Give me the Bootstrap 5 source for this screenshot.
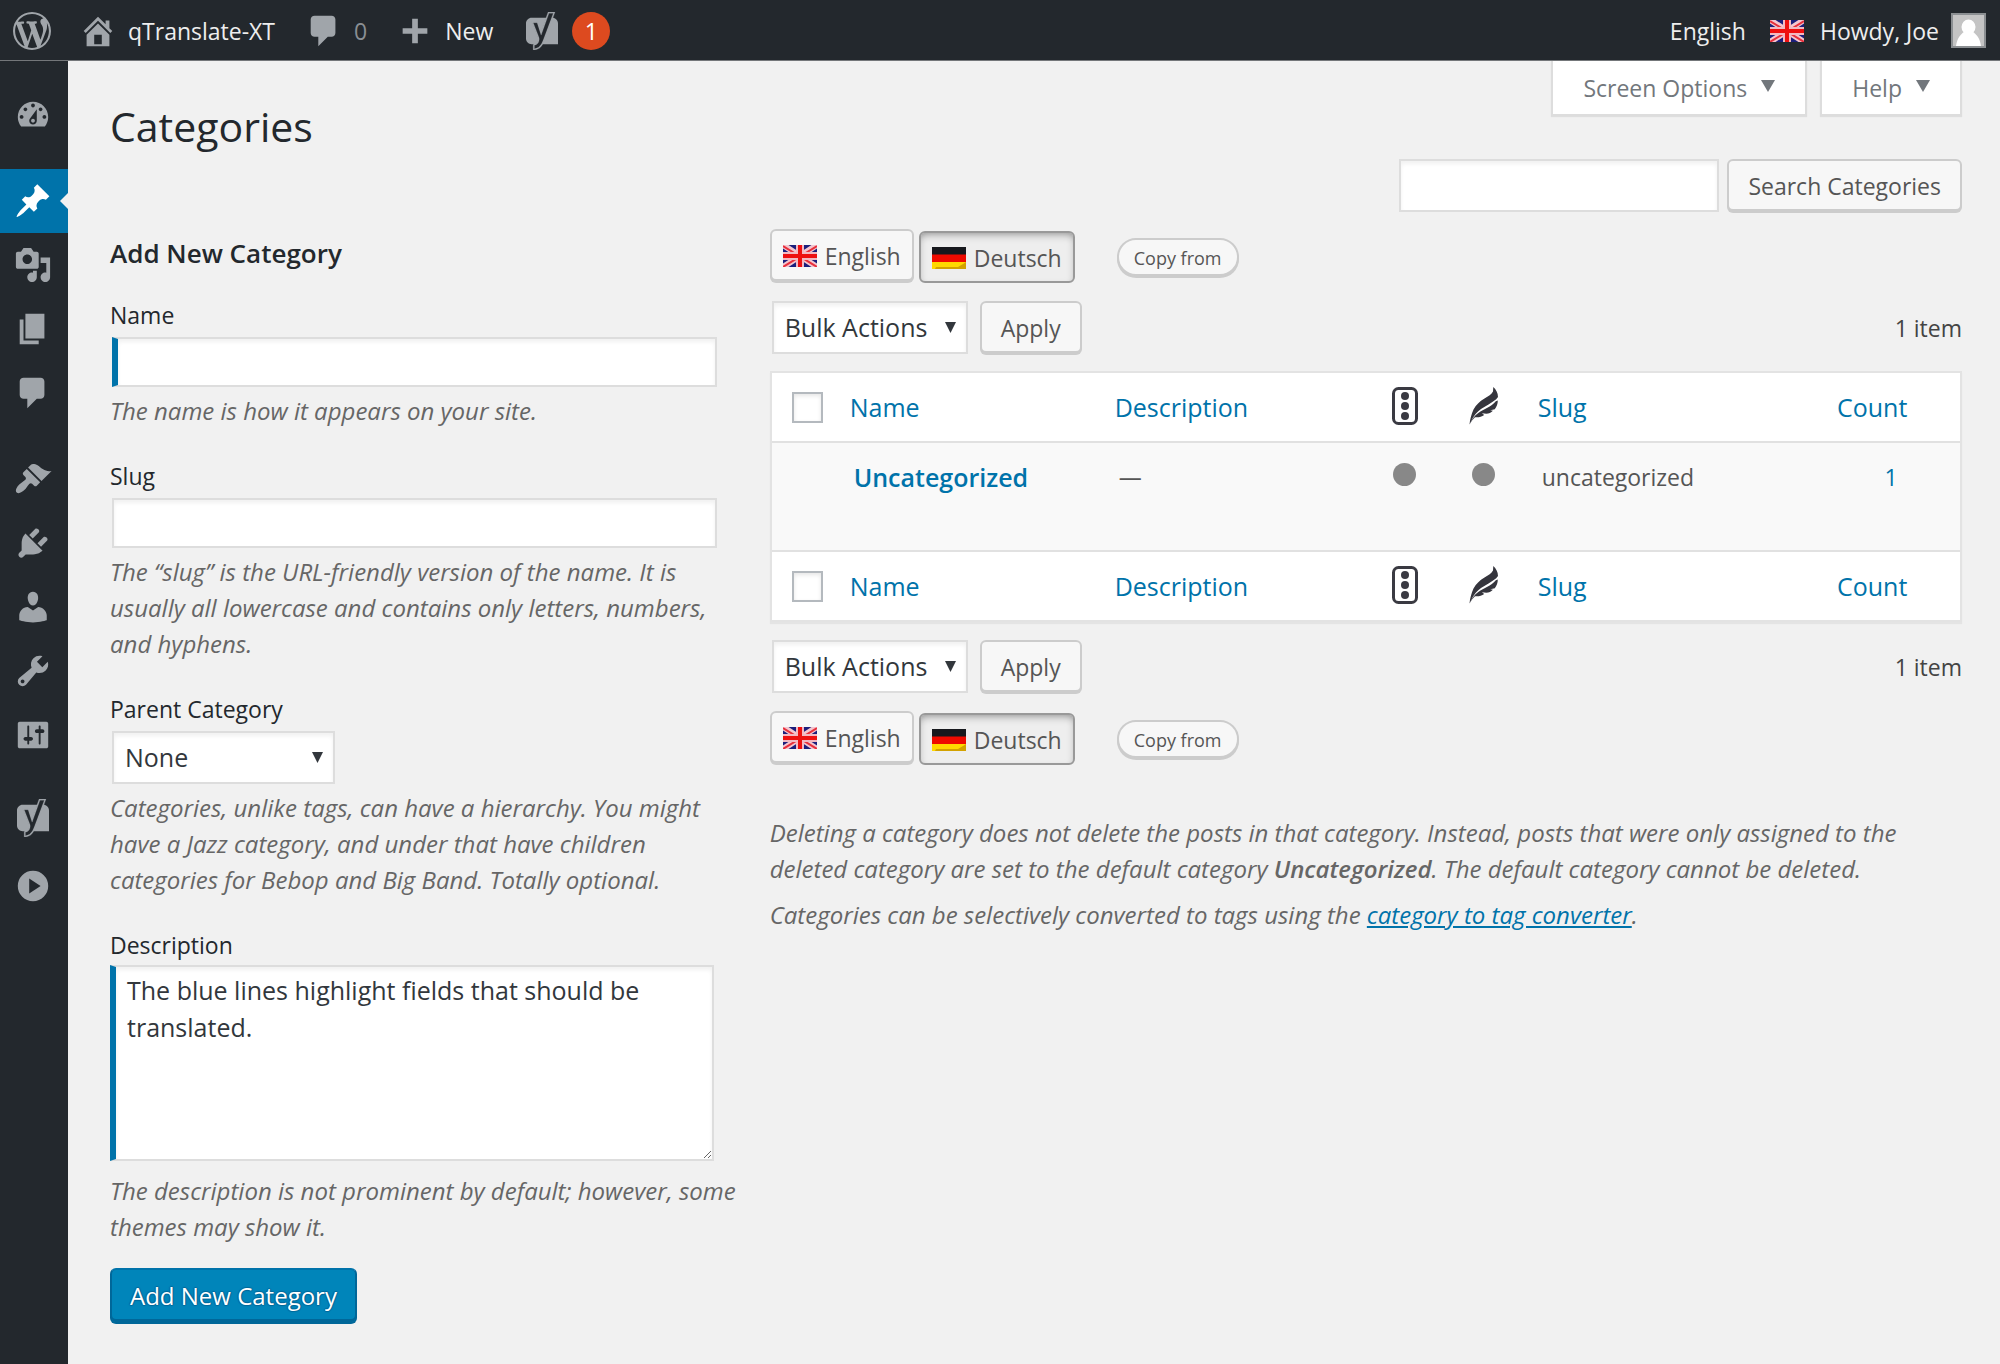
<!DOCTYPE html>
<html lang="en">
<head>
<meta charset="utf-8">
<meta name="viewport" content="width=device-width, initial-scale=1">
<title>Categories ‹ qTranslate-XT</title>
<link href="https://cdn.jsdelivr.net/npm/bootstrap@5.3.0/dist/css/bootstrap.min.css" rel="stylesheet">
<style>
  :root { --ink: #23282d; --wp-blue: #0073aa; --icon-grey: #a0a5aa; --line: #ddd; }
  body { font-family: "Open Sans", "Noto Sans", sans-serif; font-size: 23px; line-height: 36px; color: #444; background: #f1f1f1; }
  a { color: var(--wp-blue); }
  .dash { width: 38px; height: 38px; fill: currentColor; flex: none; display: block; }
  .flag { width: 34px; height: 22px; flex: none; display: block; }

  .adminbar { height: 61px; background: var(--ink); color: #eee; border-bottom: 1px solid #74777a; padding: 1px 14px 0 13px; }
  .adminbar a { color: #eee; text-decoration: none; }
  .adminbar .dash { color: var(--icon-grey); }
  .adminbar .muted-num { color: #8a8f94; }
  .bubble { width: 38px; height: 38px; border-radius: 50%; background: #dd4a1f; color: #fff; }
  .avatar-pic { width: 35px; height: 35px; margin-left: 12px; }
  .bar-home { margin-left: 28px; gap: 11px; }
  .bar-comments { margin-left: 30px; gap: 11px; }
  .bar-new { margin-left: 29px; gap: 11px; }
  .bar-seo { margin-left: 30px; gap: 11px; }
  .bar-user { margin-left: 16px; }

  .sidemenu { width: 68px; flex: none; background: var(--ink); color: var(--icon-grey); padding-top: 22px; }
  .sidemenu ul { margin: 0 0 22px; padding: 0; list-style: none; }
  .sidemenu a { height: 64px; color: inherit; position: relative; padding-right: 2px; }
  .sidemenu ul.plugin-items { margin-top: -5px; }
  .sidemenu ul.plugin-items a { height: 68px; }
  .sidemenu a.current { background: var(--wp-blue); color: #fff; }
  .sidemenu a.current::after { content: ""; position: absolute; right: 0; top: 24px; border: 8px solid transparent; border-right-color: #f1f1f1; border-left: 0; }

  .shell { min-height: calc(100vh - 61px); }
  main { padding: 0 38px 40px 42px; min-width: 0; }
  .page-head { height: 98px; }
  h1 { font-size: 41px; line-height: 60px; font-weight: 400; color: var(--ink); margin: 35px 0 0; }
  .meta-tabs { gap: 13px; }
  .meta-tab { height: 55px; background: #fff; border: 2px solid var(--line); border-top: 0; color: #72777c; padding: 0 30px; gap: 14px; box-shadow: 0 1px 1px rgba(0,0,0,.08); }
  .meta-tab::after { content: ""; border: 7px solid transparent; border-top: 12px solid #72777c; border-bottom: 0; margin-top: -4px; }

  .wp-btn { padding: 2px 19px 0; font-size: 23px; line-height: 36px; color: #555; background: #f7f7f7; border: 2px solid #ccc; border-radius: 6px; box-shadow: 0 2px 0 #ccc; margin-bottom: 2px; height: 52px; }
  .wp-btn:hover { color: var(--ink); background: #fafafa; border-color: #999; }
  .lang-btn { padding: 2px 11px 0; gap: 8px; }
  .lang-btn.pressed { background: #eee; border-color: #999; box-shadow: inset 0 4px 10px -4px rgba(0,0,0,.5); margin: 2px 0 0 5px; }
  .copy-btn { height: 38px; font-size: 18px; padding: 2px 15px 0; border-radius: 20px; margin: 2px 0 0 42px; }
  .primary-btn { height: 56px; color: #fff; background: #0085ba; border: 2px solid #006799; border-top-color: #0073aa; border-radius: 6px; box-shadow: inset 0 -3px 0 #006799; padding: 0 18px; font-size: 24px; line-height: 36px; text-shadow: 0 -1px 1px #006799, 1px 0 1px #006799, 0 1px 1px #006799, -1px 0 1px #006799; }

  .wp-field { font-size: 25px; line-height: 37px; color: #32373c; background-color: #fff; border: 2px solid var(--line); border-radius: 0; box-shadow: inset 0 3px 4px rgba(0,0,0,.06); }
  input.wp-field { height: 50px; width: calc(96% + 1px); margin-left: 2px; padding: 0 8px; }
  select.wp-field { height: 53px; margin-left: 2px; padding: 0 36px 0 11px; background-position: right 10px center; background-size: 11px 11px;
    --bs-form-select-bg-img: url("data:image/svg+xml,%3csvg xmlns='http://www.w3.org/2000/svg' viewBox='0 0 11 11'%3e%3cpath fill='%2332373c' d='M0 0h11L5.500 11z'/%3e%3c/svg%3e"); }
  .wp-field.translatable { border-left: 6px solid var(--wp-blue); }
  textarea.wp-field { height: 196px; width: 96%; padding: 5px 11px; resize: both; display: block; }
  select.parent-pick { width: 223px; }
  select.bulk { width: 196px; }
  .search-row { gap: 8px; margin-bottom: 16px; }
  .search-row input.wp-field { width: 320px; height: 53px; margin: 0; }

  .two-col { display: grid; grid-template-columns: 34% minmax(0, 1fr); column-gap: 30px; }
  h2 { font-size: 26px; line-height: 36px; font-weight: 600; color: var(--ink); margin: 6px 0 26px; }
  .field-group { margin-bottom: 29px; }
  .field-group label { display: block; color: var(--ink); margin-bottom: 4px; }
  .field-group input, .field-group select { display: block; }
  .hint { font-size: 24px; font-style: italic; color: #666; margin: 6px 0 0; }
  .field-group.last-field { margin-bottom: 23px; }
  .last-field label { margin-bottom: 2px; }
  .last-field .hint { margin-top: 12px; }

  .lang-row { height: 54px; }
  .action-row { height: 54px; margin: 18px 0 17px; gap: 12px; }
  .lang-row + .action-row { margin-bottom: 16px; }
  .terms { width: 100%; table-layout: fixed; border-collapse: separate; border-spacing: 0; background: #fff; border: 2px solid #e3e3e3; box-shadow: 0 2px 1px rgba(0,0,0,.05); }
  .terms th { height: 68px; padding: 0 15px; font-weight: 400; font-size: 25px; vertical-align: middle; }
  .terms th a { text-decoration: none; }
  .terms .pic { padding: 0; text-align: center; }
  .terms .pic svg { display: block; margin: -3px auto 0; }
  .terms tbody td { height: 111px; padding: 16px 19px; vertical-align: top; background: #f9f9f9; border: solid #e1e1e1; border-width: 2px 0; color: #555; }
  .terms tbody td.pic { padding: 20px 0 0; }
  .terms tbody a { text-decoration: none; }
  .row-title { font-weight: 600; font-size: 25px; }
  .score { display: block; width: 23px; height: 23px; border-radius: 50%; background: #888; margin: 0 auto; }
  .tick { appearance: none; width: 31px; height: 31px; border: 2px solid #b4b9be; background: #fff; box-shadow: inset 0 2px 4px rgba(0,0,0,.1); margin: 0 0 0 5px; display: block; }
  .notes { margin-top: 50px; font-size: 24px; font-style: italic; color: #666; }
  .notes p { margin: 0 0 10px; }
  .notes strong { font-weight: 600; }
</style>
</head>
<body>

<svg width="0" height="0" class="d-none" aria-hidden="true">
  <symbol id="uk" viewBox="0 0 34 22" preserveAspectRatio="none">
    <path fill="#1b1f7c" d="M0 0h34v22H0z"/>
    <path stroke="#f4c6cf" stroke-width="6" d="M0 0l34 22M34 0L0 22"/>
    <path stroke="#e8303c" stroke-width="2" d="M0 1l34 21M34 1L0 22"/>
    <path fill="#f2b9c2" d="M13 0h8v22h-8zM0 7h34v8H0z"/>
    <path fill="#ee1010" d="M15 0h4v22h-4zM0 9h34v4H0z"/>
  </symbol>
  <symbol id="de" viewBox="0 0 34 22" preserveAspectRatio="none">
    <path fill="#16181d" d="M0 0h34v8H0z"/><path fill="#ee0a00" d="M0 7.500h34v8H0z"/><path fill="#ffd800" d="M0 15h34v7H0z"/>
    <path fill="#d3a200" d="M34 15v7H3l1-2h22l5-3z"/>
  </symbol>
  <symbol id="yoast" viewBox="0 0 512 512">
    <path d="M203.600 395c6.800-17.400 6.800-36.600 0-54l-79.400-204h70.900l47.700 149.400 74.800-207.600H116.400c-41.800 0-76 34.200-76 76V357c0 41.800 34.200 76 76 76H173c16-8.900 24.600-22.700 30.600-38z"/>
    <path d="M471.600 154.800c0-41.800-34.200-76-76-76h-3L285.700 365c-9.600 26.700-19.400 49.300-30.300 68h216.200V154.800z"/>
    <path stroke="currentColor" stroke-width="3" d="M338 1.300l-93.300 259.100-42.100-131.900h-89.100l83.800 215.200c6 15.500 6 32.500 0 48-7.400 19-19 37.300-53 41.900l-7.200 1v76h8.300c81.700 0 118.900-57.200 149.600-142.900L431.600 1.300H338zM279.400 362c-32.900 92-67.600 128.700-125.700 131.800v-45c37.500-7.500 51.300-31 59.100-51.100 7.500-19.300 7.500-40.700 0-60l-75-192.700h52.800l53.300 166.800 105.900-294h58.100L279.400 362z"/>
  </symbol>
  <symbol id="comment" viewBox="0 0 20 20"><path d="M5 2h9c1.100 0 2 .9 2 2v7c0 1.100-.9 2-2 2h-2l-5 5v-5H5c-1.100 0-2-.9-2-2V4c0-1.100.9-2 2-2z"/></symbol>
  <symbol id="lights" viewBox="0 0 26 38">
    <rect x="1.500" y="1.500" width="23" height="35" rx="5" fill="none" stroke="#3a3a42" stroke-width="3"/>
    <g fill="#3a3a42"><circle cx="13" cy="9" r="4"/><circle cx="13" cy="19" r="4"/><circle cx="13" cy="29" r="4"/></g>
  </symbol>
  <symbol id="feather" viewBox="0 0 30 38">
    <path fill="#35353d" d="M24.300 0C27 2.500 29 6 29 10l-1.800 2.200C22 16.500 17 18.500 12 22c-4 3-6.500 6-8.500 9.500L.5 37.500C1 32 2.500 27 4.500 22.500 7 18 10.500 14.500 15.500 11.500 19.500 9 22.500 7.500 24 4.500z"/>
    <path fill="#35353d" d="M28.800 13.500c0 3.500-1.200 6.300-3 8.700l-4.500 1 2.600.6c-1.800 1.900-4 2.800-6.600 3l-4.300-.6 2.200 1.900c-2.700 2.100-5.500 2.400-9.200 2.200C4.500 31.500 2.500 34 .5 37.500c2-5 4.800-8.500 8.800-11.500C15 21.900 22 20 26.800 14.300z"/>
  </symbol>
</svg>

<header class="adminbar d-flex align-items-center">
  <a href="#" aria-label="About WordPress"><svg class="dash" viewBox="0 0 20 20"><path d="M20 10c0-5.510-4.490-10-10-10C4.480 0 0 4.490 0 10c0 5.520 4.480 10 10 10 5.510 0 10-4.480 10-10zM7.780 15.370L4.370 6.220c.55-.02 1.170-.08 1.170-.08.5-.06.44-1.130-.06-1.110 0 0-1.450.11-2.370.11-.18 0-.37 0-.58-.01C4.120 2.690 6.870 1.110 10 1.110c2.330 0 4.450.87 6.050 2.340-.68-.11-1.650.39-1.650 1.580 0 .74.45 1.360.9 2.100.35.61.55 1.360.55 2.460 0 1.490-1.400 5-1.400 5l-3.030-8.370c.54-.02.82-.17.82-.17.5-.05.44-1.250-.06-1.220 0 0-1.440.12-2.380.12-.87 0-2.330-.12-2.330-.12-.5-.03-.56 1.200-.06 1.220l.92.08 1.260 3.410zM17.410 10c.24-.64.74-1.870.43-4.250.7 1.290 1.050 2.710 1.050 4.250 0 3.290-1.730 6.240-4.400 7.780.97-2.590 1.940-5.200 2.920-7.780zM6.100 18.090C3.120 16.650 1.110 13.530 1.110 10c0-1.300.23-2.480.72-3.590C3.250 10.300 4.670 14.200 6.100 18.090zm4.030-6.630l2.580 6.980c-.86.29-1.760.45-2.710.45-.79 0-1.570-.11-2.290-.33.81-2.380 1.620-4.740 2.420-7.100z"/></svg></a>
  <a href="#" class="bar-home d-flex align-items-center"><svg class="dash" viewBox="0 0 20 20"><path fill-rule="evenodd" d="M16 8.500l1.530 1.530-1.060 1.060L10 4.600l-6.470 6.490-1.060-1.060L10 2.500l4 4v-2h2v4zm-6-2.460l6 5.990V18H4v-5.970zM12 17v-5H8v5h4z"/></svg>qTranslate-XT</a>
  <a href="#" class="bar-comments d-flex align-items-center" aria-label="Comments"><svg class="dash"><use href="#comment"/></svg><span class="muted-num">0</span></a>
  <a href="#" class="bar-new d-flex align-items-center"><svg class="dash" viewBox="0 0 20 20"><path d="M16.500 8.500v3H11.500v5h-3v-5h-5v-3h5v-5h3v5z"/></svg>New</a>
  <a href="#" class="bar-seo d-flex align-items-center" aria-label="SEO"><svg class="dash"><use href="#yoast"/></svg><span class="bubble d-flex align-items-center justify-content-center">1</span></a>
  <div class="ms-auto d-flex align-items-center">
    <a href="#">English</a>
    <svg class="flag ms-4"><use href="#uk"/></svg>
    <a href="#" class="bar-user d-flex align-items-center">Howdy, Joe
      <svg class="avatar-pic" viewBox="0 0 35 35"><path fill="#8b8f92" d="M0 0h35v35H0z"/><path fill="#c4c4c4" d="M2 2h31v31H2z"/><ellipse cx="17.500" cy="14" rx="7" ry="7.500" fill="#fff"/><path fill="#fff" d="M5 33c1-8 5-12 8-14h9c3 2 7 6 8 14z"/></svg></a>
  </div>
</header>

<div class="shell d-flex">
  <nav class="sidemenu" aria-label="Main menu">
    <ul>
      <li><a href="#" class="d-flex align-items-center justify-content-center" aria-label="Dashboard"><svg class="dash" viewBox="0 0 20 20"><path fill-rule="evenodd" d="M3.760 16h12.480c1.100-1.370 1.760-3.110 1.760-5 0-4.420-3.580-8-8-8s-8 3.580-8 8c0 1.890.66 3.630 1.760 5zM10 4c.55 0 1 .45 1 1s-.45 1-1 1-1-.45-1-1 .45-1 1-1zM6 6c.55 0 1 .45 1 1s-.45 1-1 1-1-.45-1-1 .45-1 1-1zm8 0c.55 0 1 .45 1 1s-.45 1-1 1-1-.45-1-1 .45-1 1-1zm-5.370 5.550L12 7v6c0 1.100-.9 2-2 2s-2-.9-2-2c0-.57.24-1.080.63-1.450zM4 10c.55 0 1 .45 1 1s-.45 1-1 1-1-.45-1-1 .45-1 1-1zm12 0c.55 0 1 .45 1 1s-.45 1-1 1-1-.45-1-1 .45-1 1-1zm-5 3c0-.55-.45-1-1-1s-1 .45-1 1 .45 1 1 1 1-.45 1-1z"/></svg></a></li>
    </ul>
    <ul>
      <li><a href="#" class="current d-flex align-items-center justify-content-center" aria-label="Posts"><svg class="dash" viewBox="0 0 20 20"><path d="M10.440 3.020l1.820-1.820 6.360 6.350-1.830 1.820c-1.050-.68-2.480-.57-3.410.36l-.75.75c-.92.93-1.040 2.350-.35 3.410l-1.830 1.820-2.410-2.410-2.800 2.790c-.42.42-3.380 2.710-3.800 2.290s1.860-3.390 2.280-3.810l2.790-2.790L4.100 9.360l1.830-1.820c1.050.69 2.480.57 3.400-.36l.75-.75c.93-.92 1.050-2.350.36-3.410z"/></svg></a></li>
      <li><a href="#" class="d-flex align-items-center justify-content-center" aria-label="Media"><svg class="dash" viewBox="0 0 20 20"><path fill-rule="evenodd" d="M13 11V4c0-.55-.45-1-1-1h-1.670L9 1H5L3.670 3H2c-.55 0-1 .45-1 1v7c0 .55.45 1 1 1h10c.55 0 1-.45 1-1zM7 4.500c1.380 0 2.500 1.120 2.500 2.500S8.380 9.500 7 9.500 4.500 8.380 4.500 7 5.620 4.500 7 4.500zM14 6h5v10.500c0 1.380-1.120 2.500-2.500 2.500S14 17.880 14 16.500s1.120-2.500 2.500-2.500c.17 0 .34.02.5.05V9h-3V6zm-4 8.050V13h2v3.500c0 1.380-1.120 2.500-2.500 2.500S7 17.880 7 16.500 8.120 14 9.500 14c.17 0 .34.02.5.05z"/></svg></a></li>
      <li><a href="#" class="d-flex align-items-center justify-content-center" aria-label="Pages"><svg class="dash" viewBox="0 0 20 20"><path d="M6 15V2h10v13H6zm-1 1h8v2H3V5h2v11z"/></svg></a></li>
      <li><a href="#" class="d-flex align-items-center justify-content-center" aria-label="Comments"><svg class="dash"><use href="#comment"/></svg></a></li>
    </ul>
    <ul>
      <li><a href="#" class="d-flex align-items-center justify-content-center" aria-label="Appearance"><svg class="dash" viewBox="0 0 20 20"><path d="M14.480 11.060L7.410 3.990l1.500-1.500c.5-.56 2.300-.47 3.510.32 1.210.8 1.430 1.280 2.910 2.100 1.180.64 2.450 1.260 4.450.85zm-.71.71L6.700 4.700 4.930 6.470c-.39.39-.39 1.020 0 1.410l1.060 1.060c.39.39.39 1.030 0 1.420-.6.6-1.430 1.110-2.210 1.690-.35.26-.7.53-1.010.84C1.430 14.230.4 16.080 1.400 17.070c.99 1 2.840-.03 4.180-1.360.31-.31.58-.66.85-1.020.57-.78 1.080-1.610 1.690-2.210.39-.39 1.020-.39 1.410 0l1.060 1.060c.39.39 1.020.39 1.410 0z"/></svg></a></li>
      <li><a href="#" class="d-flex align-items-center justify-content-center" aria-label="Plugins"><svg class="dash" viewBox="0 0 20 20"><path d="M13.110 4.360L9.870 7.600 8 5.730l3.240-3.240c.35-.34 1.050-.2 1.560.32.52.51.66 1.210.31 1.550zm-8 1.770l.91-1.120 9.010 9.010-1.190.84c-.71.71-2.630 1.160-3.820 1.160H6.140L4.900 17.260c-.59.59-1.540.59-2.120 0-.59-.58-.59-1.530 0-2.120l1.240-1.240v-3.880c0-1.130.4-3.190 1.090-3.890zm7.260 3.970l3.240-3.240c.34-.35 1.040-.21 1.550.31.52.51.66 1.210.31 1.550l-3.240 3.250z"/></svg></a></li>
      <li><a href="#" class="d-flex align-items-center justify-content-center" aria-label="Users"><svg class="dash" viewBox="0 0 20 20"><path d="M10 9.250c-2.270 0-2.730-3.440-2.730-3.440C7 4.020 7.820 2 9.970 2c2.160 0 2.980 2.020 2.710 3.810 0 0-.41 3.440-2.680 3.440zm0 2.570L12.720 10c2.390 0 4.520 2.330 4.520 4.530v2.490s-3.650 1.130-7.240 1.130c-3.650 0-7.240-1.130-7.240-1.130v-2.490c0-2.250 1.940-4.480 4.470-4.480z"/></svg></a></li>
      <li><a href="#" class="d-flex align-items-center justify-content-center" aria-label="Tools"><svg class="dash" viewBox="0 0 20 20"><path fill-rule="evenodd" d="M16.680 9.770c-1.340 1.340-3.300 1.670-4.950.99l-5.410 6.520c-.99.99-2.590.99-3.580 0s-.99-2.590 0-3.570l6.520-5.420c-.68-1.650-.35-3.610.99-4.950 1.280-1.280 3.120-1.620 4.720-1.060l-2.890 2.890 2.820 2.820 2.860-2.870c.53 1.580.18 3.390-1.080 4.650zM3.810 16.210c.4.39 1.040.39 1.430 0 .4-.4.4-1.040 0-1.430-.39-.4-1.030-.4-1.430 0-.39.39-.39 1.030 0 1.430z"/></svg></a></li>
      <li><a href="#" class="d-flex align-items-center justify-content-center" aria-label="Settings"><svg class="dash" viewBox="0 0 20 20"><path fill-rule="evenodd" d="M18 16V4c0-.55-.45-1-1-1H3c-.55 0-1 .45-1 1v12c0 .55.45 1 1 1h14c.55 0 1-.45 1-1zM8 11h1c.55 0 1 .45 1 1s-.45 1-1 1H8v1.500c0 .28-.22.5-.5.5s-.5-.22-.5-.5V13H6c-.55 0-1-.45-1-1s.45-1 1-1h1V5.500c0-.28.22-.5.5-.5s.5.22.5.5V11zm5-2h-1c-.55 0-1-.45-1-1s.45-1 1-1h1V5.500c0-.28.22-.5.5-.5s.5.22.5.5V7h1c.55 0 1 .45 1 1s-.45 1-1 1h-1v5.500c0 .28-.22.5-.5.5s-.5-.22-.5-.5V9z"/></svg></a></li>
    </ul>
    <ul class="plugin-items">
      <li><a href="#" class="d-flex align-items-center justify-content-center" aria-label="SEO"><svg class="dash"><use href="#yoast"/></svg></a></li>
      <li><a href="#" class="d-flex align-items-center justify-content-center" aria-label="Collapse menu"><svg class="dash" viewBox="0 0 20 20"><path fill-rule="evenodd" d="M10 2a8 8 0 1 1 0 16 8 8 0 0 1 0-16zM8 6v8l6-4z"/></svg></a></li>
    </ul>
  </nav>

  <main class="flex-grow-1">
    <div class="page-head d-flex justify-content-between align-items-start">
      <h1>Categories</h1>
      <div class="meta-tabs d-flex">
        <button type="button" class="meta-tab d-flex align-items-center">Screen Options</button>
        <button type="button" class="meta-tab d-flex align-items-center">Help</button>
      </div>
    </div>

    <form class="search-row d-flex justify-content-end">
      <input type="search" class="form-control wp-field" aria-label="Search Categories">
      <button type="button" class="btn wp-btn">Search Categories</button>
    </form>

    <div class="two-col">
      <form>
        <h2>Add New Category</h2>
        <div class="field-group">
          <label for="name">Name</label>
          <input id="name" type="text" class="form-control wp-field translatable">
          <p class="hint">The name is how it appears on your site.</p>
        </div>
        <div class="field-group">
          <label for="slug">Slug</label>
          <input id="slug" type="text" class="form-control wp-field">
          <p class="hint">The “slug” is the URL-friendly version of the name. It is usually all lowercase and contains only letters, numbers, and hyphens.</p>
        </div>
        <div class="field-group">
          <label for="parent">Parent Category</label>
          <select id="parent" class="form-select wp-field parent-pick"><option>None</option></select>
          <p class="hint">Categories, unlike tags, can have a hierarchy. You might have a Jazz category, and under that have children categories for Bebop and Big Band. Totally optional.</p>
        </div>
        <div class="field-group last-field">
          <label for="description">Description</label>
          <textarea id="description" class="form-control wp-field translatable">The blue lines highlight fields that should be translated.</textarea>
          <p class="hint">The description is not prominent by default; however, some themes may show it.</p>
        </div>
        <button type="button" class="btn primary-btn">Add New Category</button>
      </form>

      <section>
        <div class="lang-row d-flex align-items-start">
          <button type="button" class="btn wp-btn lang-btn d-flex align-items-center"><svg class="flag"><use href="#uk"/></svg>English</button>
          <button type="button" class="btn wp-btn lang-btn pressed d-flex align-items-center"><svg class="flag"><use href="#de"/></svg>Deutsch</button>
          <button type="button" class="btn wp-btn copy-btn align-self-center d-flex align-items-center">Copy from</button>
        </div>
        <div class="action-row d-flex align-items-start">
          <select class="form-select wp-field bulk" aria-label="Bulk action"><option>Bulk Actions</option></select>
          <button type="button" class="btn wp-btn">Apply</button>
          <span class="ms-auto align-self-center">1 item</span>
        </div>

        <table class="terms">
          <colgroup><col style="width:63px"><col style="width:265px"><col style="width:265px"><col style="width:80px"><col style="width:78px"><col><col style="width:138px"></colgroup>
          <thead>
            <tr>
              <th><input type="checkbox" class="tick" aria-label="Select all"></th>
              <th scope="col"><a href="#">Name</a></th>
              <th scope="col"><a href="#">Description</a></th>
              <th scope="col" class="pic" aria-label="SEO score"><svg width="26" height="38"><use href="#lights"/></svg></th>
              <th scope="col" class="pic" aria-label="Readability score"><svg width="30" height="38"><use href="#feather"/></svg></th>
              <th scope="col"><a href="#">Slug</a></th>
              <th scope="col"><a href="#">Count</a></th>
            </tr>
          </thead>
          <tbody>
            <tr>
              <td></td>
              <td><a href="#" class="row-title">Uncategorized</a></td>
              <td>—</td>
              <td class="pic"><span class="score"></span></td>
              <td class="pic"><span class="score"></span></td>
              <td>uncategorized</td>
              <td class="text-center"><a href="#">1</a></td>
            </tr>
          </tbody>
          <tfoot>
            <tr>
              <th><input type="checkbox" class="tick" aria-label="Select all"></th>
              <th scope="col"><a href="#">Name</a></th>
              <th scope="col"><a href="#">Description</a></th>
              <th scope="col" class="pic" aria-label="SEO score"><svg width="26" height="38"><use href="#lights"/></svg></th>
              <th scope="col" class="pic" aria-label="Readability score"><svg width="30" height="38"><use href="#feather"/></svg></th>
              <th scope="col"><a href="#">Slug</a></th>
              <th scope="col"><a href="#">Count</a></th>
            </tr>
          </tfoot>
        </table>

        <div class="action-row d-flex align-items-start">
          <select class="form-select wp-field bulk" aria-label="Bulk action"><option>Bulk Actions</option></select>
          <button type="button" class="btn wp-btn">Apply</button>
          <span class="ms-auto align-self-center">1 item</span>
        </div>
        <div class="lang-row d-flex align-items-start">
          <button type="button" class="btn wp-btn lang-btn d-flex align-items-center"><svg class="flag"><use href="#uk"/></svg>English</button>
          <button type="button" class="btn wp-btn lang-btn pressed d-flex align-items-center"><svg class="flag"><use href="#de"/></svg>Deutsch</button>
          <button type="button" class="btn wp-btn copy-btn align-self-center d-flex align-items-center">Copy from</button>
        </div>

        <div class="notes">
          <p>Deleting a category does not delete the posts in that category. Instead, posts that were only assigned to the deleted category are set to the default category <strong>Uncategorized</strong>. The default category cannot be deleted.</p>
          <p>Categories can be selectively converted to tags using the <a href="#">category to tag converter</a>.</p>
        </div>
      </section>
    </div>
  </main>
</div>

<script src="https://cdn.jsdelivr.net/npm/bootstrap@5.3.0/dist/js/bootstrap.bundle.min.js"></script>
</body>
</html>
